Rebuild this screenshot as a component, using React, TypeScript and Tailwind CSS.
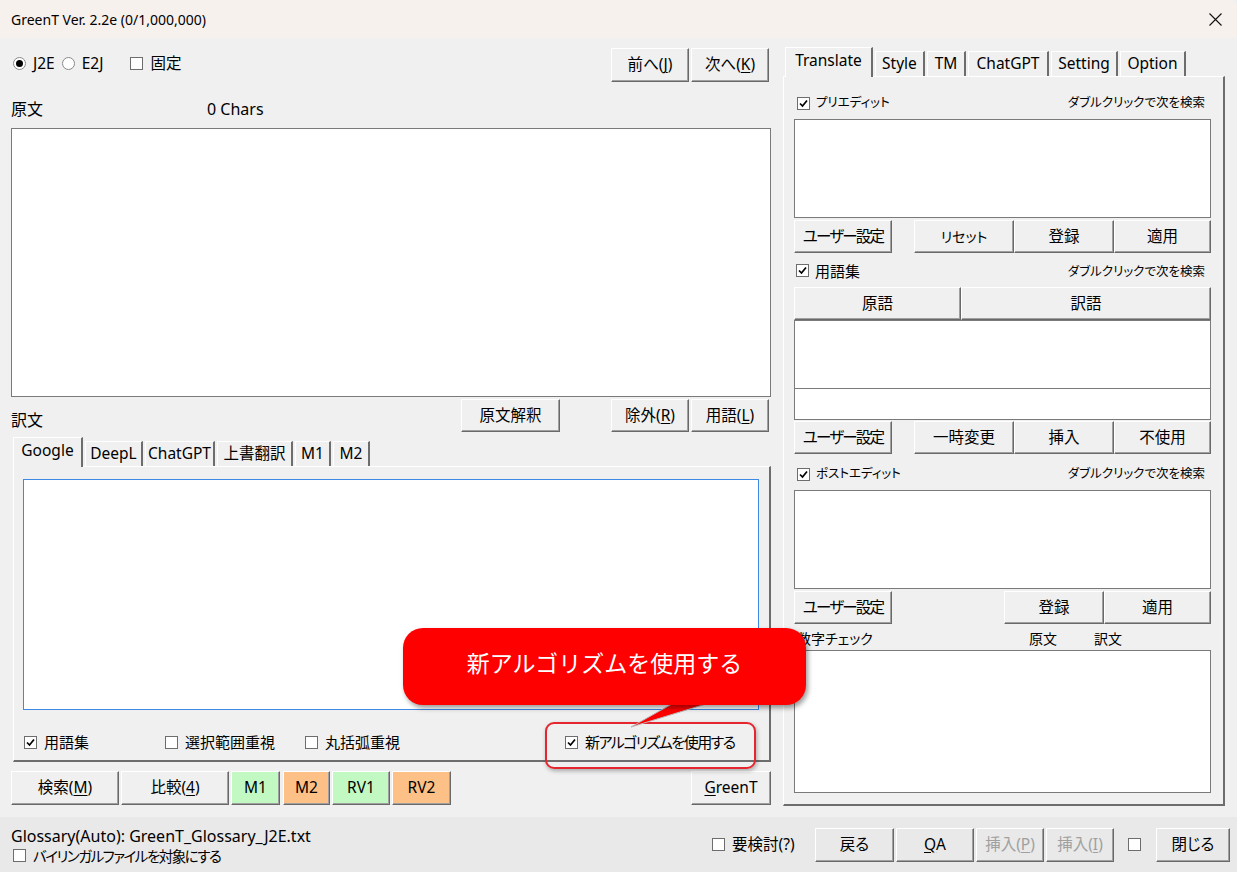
import type { ReactNode } from "react";

const face = "font-['Noto_Sans','Noto_Sans_CJK_JP',sans-serif] [font-feature-settings:'palt']";

function Btn({
  children,
  className = "",
  disabled = false,
}: {
  children: ReactNode;
  className?: string;
  disabled?: boolean;
}) {
  return (
    <div
      className={`flex shrink-0 items-center justify-center border border-t-white border-l-white border-r-[#696969] border-b-[#696969] shadow-[inset_-1px_-1px_0_#a0a0a0] text-[15.5px] ${
        disabled ? "text-[#a0a0a0]" : "text-black"
      } ${className}`}
    >
      {children}
    </div>
  );
}

function Check({ on = false }: { on?: boolean }) {
  return (
    <span className="flex h-[13px] w-[13px] shrink-0 items-center justify-center border border-[#6d6d6d] bg-white">
      {on && (
        <svg width="9" height="9" viewBox="0 0 9 9">
          <path d="M1 4.5 L3.5 7 L8 1.5" fill="none" stroke="#000" strokeWidth="1.7" />
        </svg>
      )}
    </span>
  );
}

function Radio({ on = false }: { on?: boolean }) {
  return (
    <span className="flex h-[13px] w-[13px] items-center justify-center rounded-full border border-[#8a8a8a] bg-white">
      {on && <span className="h-[7px] w-[7px] rounded-full bg-black" />}
    </span>
  );
}

function U({ children }: { children: ReactNode }) {
  return <span className="underline underline-offset-2">{children}</span>;
}

function Tab({ label, active = false, className = "" }: { label: string; active?: boolean; className?: string }) {
  return (
    <div
      className={`flex shrink-0 items-center justify-center border-t border-l border-r-2 border-t-white border-l-white border-r-[#6d6d6d] text-[15.5px] ${
        active ? "relative z-10 -mb-[1px] h-[30px] bg-[#f0f0f0] pb-[4px]" : "h-[25px]"
      } ${className}`}
    >
      {label}
    </div>
  );
}

const box = "border border-[#7a7a7a] bg-white";
const ms = "text-[12.5px]";

function UserBtn() {
  return (
    <Btn className="h-[33px] w-[98px]">
      <span className="tracking-[-1.8px]">ユーザー設定</span>
    </Btn>
  );
}

function LeftColumn() {
  return (
    <div className="flex w-[760px] flex-col">
      <div className="flex h-[44px] items-end justify-between">
        <div className="flex items-center gap-[7px] pb-[7px] pl-[2px] text-[15.5px]">
          <Radio on />
          <span>J2E</span>
          <Radio />
          <span>E2J</span>
          <span className="ml-[20px]">
            <Check />
          </span>
          <span>固定</span>
        </div>
        <div className="mr-[2px] flex gap-[2px]">
          <Btn className="h-[34px] w-[78px]">
            前へ(<U>J</U>)
          </Btn>
          <Btn className="h-[34px] w-[78px]">
            次へ(<U>K</U>)
          </Btn>
        </div>
      </div>
      <div className="flex h-[46px] items-end pb-[7px] text-[16px]">
        <span className="w-[196px]">原文</span>
        <span>0 Chars</span>
      </div>
      <div className={`h-[269px] ${box}`} />
      <div className="flex h-[41px] items-start">
        <span className="w-[450px] self-end pb-[6px] text-[16px]">訳文</span>
        <Btn className="mt-[2px] h-[33px] w-[99px]">原文解釈</Btn>
        <div className="ml-auto mr-[2px] mt-[2px] flex gap-[2px]">
          <Btn className="h-[33px] w-[78px]">
            除外(<U>R</U>)
          </Btn>
          <Btn className="h-[33px] w-[78px]">
            用語(<U>L</U>)
          </Btn>
        </div>
      </div>
      <div className="flex h-[28px] items-end gap-[2px] pl-[2px]">
        <Tab label="Google" active className="w-[70px]" />
        <Tab label="DeepL" className="w-[58px]" />
        <Tab label="ChatGPT" className="w-[70px]" />
        <Tab label="上書翻訳" className="w-[76px]" />
        <Tab label="M1" className="w-[36px]" />
        <Tab label="M2" className="w-[37px]" />
      </div>
      <div className="ml-[2px] flex h-[296px] flex-col border-t border-l border-r-2 border-b-2 border-t-white border-l-white border-r-[#6d6d6d] border-b-[#6d6d6d] pl-[9px] pr-[10px] pt-[12px]">
        <div className="h-[231px] border border-[#3c8ae6] bg-white" />
        <div className="flex items-center pt-[21px] text-[15px]">
          <div className="flex w-[142px] items-center gap-[7px] pl-[1px]">
            <Check on />
            <span>用語集</span>
          </div>
          <div className="flex w-[140px] items-center gap-[7px]">
            <Check />
            <span>選択範囲重視</span>
          </div>
          <div className="flex w-[260px] items-center gap-[7px]">
            <Check />
            <span>丸括弧重視</span>
          </div>
          <div className="flex items-center gap-[7px]">
            <Check on />
            <span className="tracking-[-1.5px]">新アルゴリズムを使用する</span>
          </div>
        </div>
      </div>
      <div className="mt-[9px] flex items-center">
        <Btn className="h-[34px] w-[108px]">
          検索(<U>M</U>)
        </Btn>
        <Btn className="ml-[2px] h-[34px] w-[108px]">
          比較(<U>4</U>)
        </Btn>
        <Btn className="ml-[2px] h-[34px] w-[49px] bg-[#c2f8c2]">M1</Btn>
        <Btn className="ml-[3px] h-[34px] w-[47px] bg-[#fdc187]">M2</Btn>
        <Btn className="ml-[2px] h-[34px] w-[58px] bg-[#c2f8c2]">RV1</Btn>
        <Btn className="ml-[2px] h-[34px] w-[59px] bg-[#fdc187]">RV2</Btn>
        <Btn className="ml-auto h-[34px] w-[80px]">
          <U>G</U>reenT
        </Btn>
      </div>
    </div>
  );
}

function RightColumn() {
  return (
    <div className="flex w-[442px] flex-col">
      <div className="flex h-[38px] items-end gap-[2px] pl-[2px]">
        <Tab label="Translate" active className="w-[88px]" />
        <Tab label="Style" className="w-[50px]" />
        <Tab label="TM" className="w-[39px]" />
        <Tab label="ChatGPT" className="w-[81px]" />
        <Tab label="Setting" className="w-[67px]" />
        <Tab label="Option" className="w-[66px]" />
      </div>
      <div className="flex h-[730px] flex-col border-t border-l border-r-2 border-b-2 border-t-white border-l-white border-r-[#6d6d6d] border-b-[#6d6d6d] pl-[10px] pr-[12px]">
        <div className="flex h-[42px] items-end justify-between pb-[6px] pl-[3px] pr-[6px]">
          <div className="flex items-center gap-[6px]">
            <Check on />
            <span className={ms}>プリエディット</span>
          </div>
          <span className={ms}>ダブルクリックで次を検索</span>
        </div>
        <div className={`h-[99px] ${box}`} />
        <div className="mt-[2px] flex">
          <UserBtn />
          <Btn className="ml-[22px] h-[33px] w-[100px]">
            <span className="text-[14px]">リセット</span>
          </Btn>
          <Btn className="h-[33px] w-[100px]">登録</Btn>
          <Btn className="h-[33px] w-[97px]">適用</Btn>
        </div>
        <div className="flex h-[34px] items-end justify-between pb-[5px] pl-[2px] pr-[6px]">
          <div className="flex items-center gap-[6px]">
            <Check on />
            <span className="text-[15px]">用語集</span>
          </div>
          <span className={ms}>ダブルクリックで次を検索</span>
        </div>
        <div className="flex">
          <Btn className="h-[33px] w-[167px]">原語</Btn>
          <Btn className="h-[33px] w-[250px]">訳語</Btn>
        </div>
        <div className={`h-[69px] ${box}`} />
        <div className={`h-[31px] border-t-0 ${box}`} />
        <div className="mt-[1px] flex">
          <UserBtn />
          <Btn className="ml-[22px] h-[33px] w-[100px]">一時変更</Btn>
          <Btn className="h-[33px] w-[100px]">挿入</Btn>
          <Btn className="h-[33px] w-[97px]">不使用</Btn>
        </div>
        <div className="flex h-[36px] items-end justify-between pb-[6px] pl-[3px] pr-[6px]">
          <div className="flex items-center gap-[6px]">
            <Check on />
            <span className={ms}>ポストエディット</span>
          </div>
          <span className={ms}>ダブルクリックで次を検索</span>
        </div>
        <div className={`h-[99px] ${box}`} />
        <div className="mt-[2px] flex">
          <UserBtn />
          <Btn className="ml-[112px] h-[33px] w-[100px]">登録</Btn>
          <Btn className="h-[33px] w-[107px]">適用</Btn>
        </div>
        <div className="flex h-[26px] items-end pb-[1px] pl-[3px] text-[14px]">
          <span className="w-[232px]">数字チェック</span>
          <span className="w-[65px]">原文</span>
          <span>訳文</span>
        </div>
        <div className={`h-[143px] ${box}`} />
      </div>
    </div>
  );
}

function StatusBar() {
  return (
    <div className="flex h-[55px] items-center bg-[#e9e9e9] pl-[11px] pr-[7px]">
      <div className="flex flex-col pt-[2px] text-[15.5px] leading-[20px]">
        <span className="text-[16px]">Glossary(Auto): GreenT_Glossary_J2E.txt</span>
        <div className="flex items-center gap-[7px] pl-[2px] text-[14.5px]">
          <Check />
          <span className="tracking-[-1.5px]">バイリンガルファイルを対象にする</span>
        </div>
      </div>
      <div className="ml-auto flex items-center">
        <Check />
        <span className="ml-[7px] w-[83px] text-[15.5px]">要検討(?)</span>
        <Btn className="h-[34px] w-[79px]">戻る</Btn>
        <Btn className="ml-[2px] h-[34px] w-[78px]">
          <U>Q</U>A
        </Btn>
        <Btn disabled className="ml-[2px] h-[34px] w-[68px]">
          挿入(<U>P</U>)
        </Btn>
        <Btn disabled className="ml-[2px] h-[34px] w-[68px]">
          挿入(<U>I</U>)
        </Btn>
        <span className="ml-[14px]">
          <Check />
        </span>
        <Btn className="ml-[15px] h-[34px] w-[74px]">閉じる</Btn>
      </div>
    </div>
  );
}

export default function App() {
  return (
    <div className={`relative flex h-[872px] w-[1237px] flex-col overflow-hidden bg-[#f0f0f0] text-black ${face}`}>
      <div className="flex h-[38px] shrink-0 items-center justify-between rounded-tr-[8px] bg-[#f7f1ee] pl-[11px] pr-[15px]">
        <span className="text-[14px]">GreenT Ver. 2.2e (0/1,000,000)</span>
        <svg width="13" height="13" viewBox="0 0 13 13">
          <path d="M0.5 0.5 L12.5 12.5 M12.5 0.5 L0.5 12.5" stroke="#111" strokeWidth="1.1" />
        </svg>
      </div>
      <div className="flex h-[779px] gap-[12px] px-[11px]">
        <LeftColumn />
        <RightColumn />
      </div>
      <StatusBar />

      {/* callout over the checkbox */}
      <div className="absolute left-[545px] top-[722px] h-[47px] w-[211px] rounded-[9px] border-2 border-[#e6262e] shadow-[1px_2px_4px_rgba(0,0,0,0.3)]" />
      <svg className="absolute left-[620px] top-[690px]" width="100" height="45" viewBox="0 0 100 45">
        <polygon points="52,14 86,14 11,37" fill="#ff0000" stroke="#b8b8b8" strokeWidth="1" />
      </svg>
      <div className="absolute left-[403px] top-[628px] flex h-[77px] w-[403px] items-center justify-center rounded-[20px] bg-[#ff0000] pb-[6px] shadow-[2px_3px_5px_rgba(0,0,0,0.4)] [font-feature-settings:normal]">
        <span className="text-[23px] text-white">新アルゴリズムを使用する</span>
      </div>
    </div>
  );
}
